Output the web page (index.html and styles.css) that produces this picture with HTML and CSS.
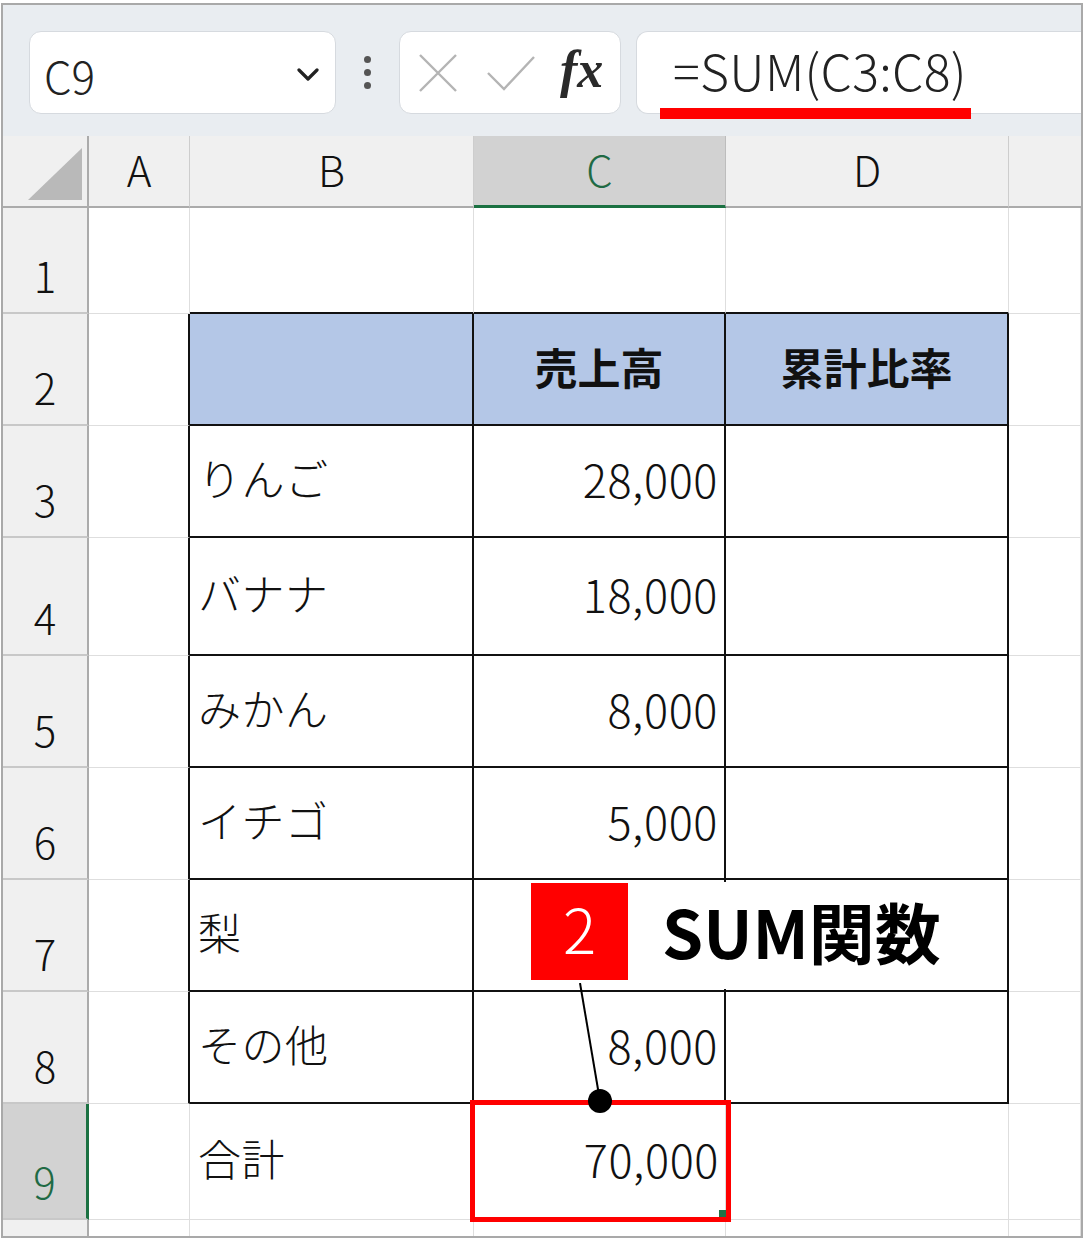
FILE: index.html
```html
<!DOCTYPE html>
<html lang="ja">
<head>
<meta charset="utf-8">
<link rel="stylesheet" href="styles.css">
</head>
<body>
<div class="frame">
  <div class="fbar">
    <div class="namebox">
      <span class="ref">C9</span>
      <svg class="chev" viewBox="0 0 22 14" width="22" height="14"><path d="M2 2 L11 11 L20 2" fill="none" stroke="#222" stroke-width="3.2" stroke-linecap="round" stroke-linejoin="round"/></svg>
    </div>
    <div class="dots"><i></i><i></i><i></i></div>
    <div class="btnbox">
      <svg class="ico" viewBox="0 0 40 40" width="40" height="40"><path d="M2 2 L38 38 M38 2 L2 38" stroke="#b4b4b4" stroke-width="2.4" fill="none"/></svg>
      <svg class="ico chk" viewBox="0 0 50 40" width="50" height="40"><path d="M2 20 L18 36 L48 4" stroke="#b4b4b4" stroke-width="2.4" fill="none"/></svg>
      <span class="fx">fx</span>
    </div>
    <div class="formula">
      <span class="ftext">=SUM(C3:C8)</span>
      <span class="uline"></span>
    </div>
  </div>

  <div class="sheet">
    <div class="ch corner"><svg viewBox="0 0 54 52" width="54" height="52"><path d="M54 0 L54 52 L0 52 Z" fill="#b9b9b9"/></svg></div>
    <div class="ch">A</div>
    <div class="ch">B</div>
    <div class="ch sel">C</div>
    <div class="ch">D</div>
    <div class="ch last"></div>

    <div class="rh">1</div><div class="c"></div><div class="c top"></div><div class="c top"></div><div class="c top"></div><div class="c"></div>

    <div class="rh">2</div><div class="c lft"></div><div class="c t hd"></div><div class="c t hd">売上高</div><div class="c t hd">累計比率</div><div class="c"></div>

    <div class="rh">3</div><div class="c lft"></div><div class="c t tx">りんご</div><div class="c t num">28,000</div><div class="c t"></div><div class="c"></div>
    <div class="rh">4</div><div class="c lft"></div><div class="c t tx">バナナ</div><div class="c t num">18,000</div><div class="c t"></div><div class="c"></div>
    <div class="rh">5</div><div class="c lft"></div><div class="c t tx">みかん</div><div class="c t num">8,000</div><div class="c t"></div><div class="c"></div>
    <div class="rh">6</div><div class="c lft"></div><div class="c t tx">イチゴ</div><div class="c t num">5,000</div><div class="c t"></div><div class="c"></div>
    <div class="rh">7</div><div class="c lft"></div><div class="c t tx">梨</div><div class="c t num"></div><div class="c t"></div><div class="c"></div>
    <div class="rh">8</div><div class="c lft"></div><div class="c t tx">その他</div><div class="c t num">8,000</div><div class="c t"></div><div class="c"></div>

    <div class="rh rsel">9</div><div class="c"></div><div class="c tx">合計</div><div class="c num">70,000</div><div class="c"></div><div class="c"></div>

    <div class="rh"></div><div class="c"></div><div class="c"></div><div class="c"></div><div class="c"></div><div class="c"></div>

    <div class="selbox"><span class="handle"></span></div>
    <svg class="leader" viewBox="0 0 60 140" width="60" height="140"><line x1="17" y1="0" x2="37" y2="118" stroke="#000" stroke-width="2"/><circle cx="37" cy="118" r="12" fill="#000"/></svg>
    <div class="badge">2</div>
    <div class="callout">SUM関数</div>
  </div>
</div>
</body>
</html>
```
FILE: styles.css
```css
html, body { margin: 0; padding: 0; background: #fff; }
body { font-family: "Noto Sans CJK JP", "Noto Sans", sans-serif; color: #111; }

.frame {
  margin: 3px 0 0 1px;
  width: 1082px;
  height: 1235px;
  box-sizing: border-box;
  border: 2px solid #a9a9a9;
  overflow: hidden;
  background: #fff;
}

.fbar {
  height: 131px;
  box-sizing: border-box;
  background: #e9edf1;
  padding: 26px 0 0 26px;
  display: flex;
  align-items: flex-start;
}
.namebox, .btnbox, .formula {
  height: 83px;
  box-sizing: border-box;
  background: #fff;
  border: 1px solid #d6dadf;
  border-radius: 12px;
  display: flex;
  align-items: center;
}
.namebox { width: 307px; padding: 0 16px 0 14px; justify-content: space-between; }
.ref { font-size: 44px; font-weight: 300; color: #222; line-height: 1; margin-top: 4px; }
.chev { margin-top: 4px; }
.dots {
  width: 63px;
  height: 83px;
  display: flex;
  flex-direction: column;
  align-items: center;
  justify-content: center;
  gap: 6px;
}
.dots i { display: block; width: 7px; height: 7px; border-radius: 50%; background: #555; }
.btnbox { width: 222px; padding: 0 0 0 18px; gap: 0; }
.btnbox .ico { flex: none; }
.btnbox .chk { margin-left: 28px; }
.fx {
  font-family: "Liberation Serif", "DejaVu Serif", serif;
  font-style: italic;
  font-weight: 700;
  font-size: 52px;
  color: #2a2a2a;
  margin-left: 24px;
  line-height: 1;
  margin-top: -6px;
}
.formula {
  flex: 1;
  margin-left: 15px;
  border-right: none;
  border-radius: 12px 0 0 12px;
  position: relative;
  padding-left: 36px;
}
.ftext { font-size: 50px; font-weight: 300; color: #222; line-height: 1; margin-top: -8px; letter-spacing: 0.3px; }
.uline {
  position: absolute;
  left: 23px;
  top: 76px;
  width: 311px;
  height: 11px;
  background: #ff0000;
}

.sheet {
  position: relative;
  display: grid;
  grid-template-columns: 86px 101px 284px 252px 283px 1fr;
  grid-template-rows: 72px 106px 112px 112px 118px 112px 112px 112px 112px 116px 1fr;
  height: 1100px;
}
.ch {
  background: #f0f0f0;
  border-right: 1px solid #cdcdcd;
  border-bottom: 2px solid #ababab;
  box-sizing: border-box;
  display: flex;
  align-items: center;
  justify-content: center;
  padding-bottom: 4px;
  font-size: 42px;
  font-weight: 300;
  color: #111;
  line-height: 1;
}
.ch.corner {
  border-right: 2px solid #ababab;
  align-items: flex-end;
  justify-content: flex-end;
  padding: 0 5px 6px 0;
}
.ch.sel {
  background: #d2d2d2;
  color: #1f6a44;
  border-bottom: 3px solid #1b7142;
  border-right-color: #bdbdbd;
}
.ch.last { border-right: none; }
.rh {
  background: #f0f0f0;
  border-right: 2px solid #ababab;
  border-bottom: 2px solid #c8c8c8;
  box-sizing: border-box;
  display: flex;
  align-items: flex-end;
  justify-content: center;
  padding-bottom: 16px;
  font-size: 42px;
  font-weight: 300;
  line-height: 1;
  color: #111;
}
.rh.rsel {
  background: #d2d2d2;
  color: #1f6a44;
  border-right: 3px solid #1b7142;
}
.c {
  border-right: 1px solid #dedede;
  border-bottom: 1px solid #dedede;
  box-sizing: border-box;
  display: flex;
  align-items: center;
  font-size: 42px;
  font-weight: 300;
  line-height: 1;
  color: #111;
}
.c.top { border-bottom: 2px solid #111; }
.c.lft { border-right: 2px solid #111; }
.c.t { border-right: 2px solid #111; border-bottom: 2px solid #111; }
.c.hd { background: #b4c7e7; justify-content: center; font-weight: 700; font-size: 43px; padding-bottom: 6px; }
.c.tx { padding: 0 0 8px 8px; font-size: 43px; letter-spacing: 0.5px; }
.c.num { justify-content: flex-end; padding: 0 6px 6px 0; font-size: 45px; letter-spacing: 0.6px; }

.selbox {
  position: absolute;
  left: 467px;
  top: 964px;
  width: 261px;
  height: 122px;
  box-sizing: border-box;
  border: 5px solid #ff0000;
}
.handle {
  position: absolute;
  right: 0;
  bottom: 0;
  width: 7px;
  height: 7px;
  background: #217346;
}
.leader {
  position: absolute;
  left: 560px;
  top: 847px;
}
.badge {
  position: absolute;
  left: 528px;
  top: 747px;
  width: 97px;
  height: 97px;
  box-sizing: border-box;
  padding-bottom: 10px;
  background: #ff0000;
  color: #fff;
  font-size: 62px;
  font-weight: 300;
  display: flex;
  align-items: center;
  justify-content: center;
  line-height: 1;
}
.callout {
  position: absolute;
  left: 625px;
  top: 746px;
  width: 345px;
  height: 107px;
  background: #fff;
  box-sizing: border-box;
  padding: 0 0 12px 34px;
  display: flex;
  align-items: center;
  font-size: 66px;
  font-weight: 700;
  color: #000;
  line-height: 1;
}
```
